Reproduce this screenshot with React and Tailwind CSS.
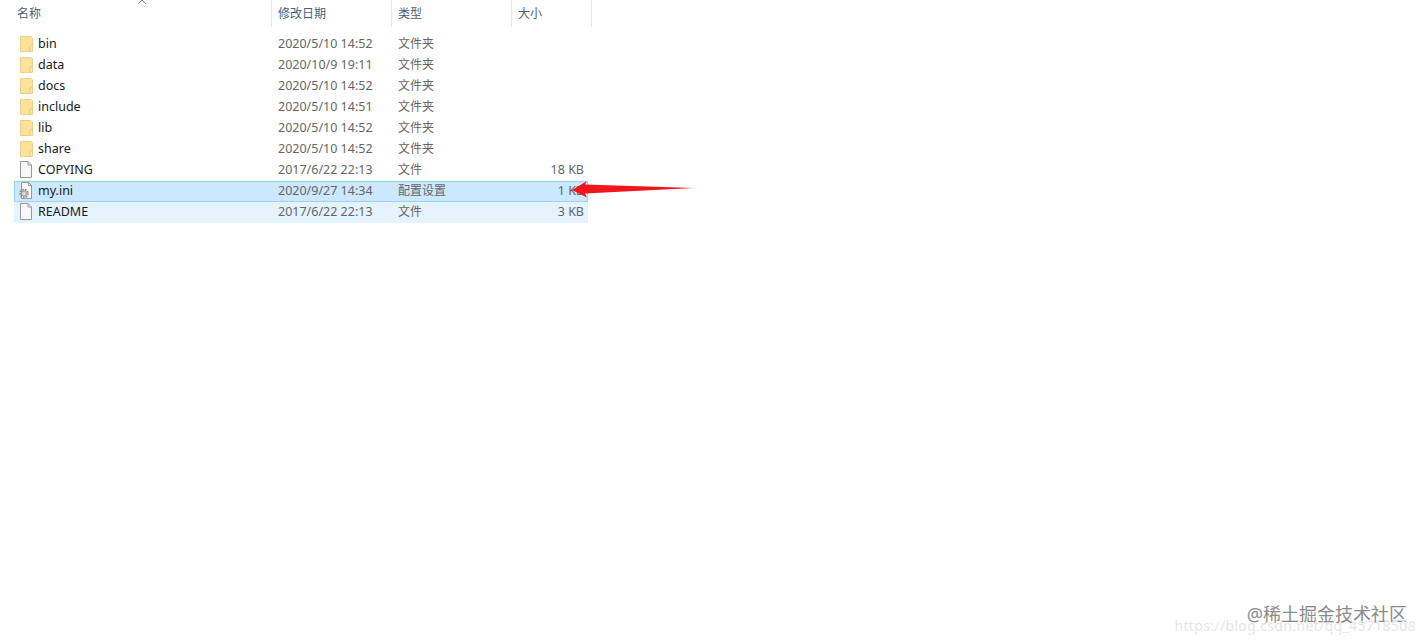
const FONT = 'font-["Noto_Sans","Noto_Sans_CJK_SC",sans-serif]';

const rows = [
  { name: 'bin', date: '2020/5/10 14:52', type: '文件夹', icon: 'folder' },
  { name: 'data', date: '2020/10/9 19:11', type: '文件夹', icon: 'folder' },
  { name: 'docs', date: '2020/5/10 14:52', type: '文件夹', icon: 'folder' },
  { name: 'include', date: '2020/5/10 14:51', type: '文件夹', icon: 'folder' },
  { name: 'lib', date: '2020/5/10 14:52', type: '文件夹', icon: 'folder' },
  { name: 'share', date: '2020/5/10 14:52', type: '文件夹', icon: 'folder' },
  { name: 'COPYING', date: '2017/6/22 22:13', type: '文件', size: '18 KB', icon: 'file' },
  { name: 'my.ini', date: '2020/9/27 14:34', type: '配置设置', size: '1 KB', icon: 'ini', selected: true },
  { name: 'README', date: '2017/6/22 22:13', type: '文件', size: '3 KB', icon: 'file', hover: true },
];

function FolderIcon() {
  return (
    <svg width="16" height="16" viewBox="0 0 16 16" className="shrink-0">
      <path d="M1.5 .5h10.5l1.5 1.5v13.5h-12z" fill="#fde29a" stroke="#ecd089" />
      <path d="M10.5 15.5v-5l3-1.5" fill="none" stroke="#ecd089" />
    </svg>
  );
}

function FileIcon() {
  return (
    <svg width="16" height="18" viewBox="0 0 16 18" className="shrink-0">
      <path d="M1.5 .5h7.5l3.5 3.5v12.5h-11z" fill="#f8f8f8" stroke="#999" />
      <path d="M9 .5v3.5h3.5" fill="none" stroke="#999" />
    </svg>
  );
}

function IniIcon() {
  return (
    <svg width="16" height="18" viewBox="0 0 16 18" className="shrink-0">
      <path d="M3.5 .5h7l3 3v13h-10z" fill="#f8f8f8" stroke="#999" />
      <path d="M10.5 .5v3h3" fill="none" stroke="#999" />
      <circle cx="6" cy="11.5" r="3.8" fill="none" stroke="#8a8a8a" strokeWidth="2" strokeDasharray="1.6 1" />
      <circle cx="6" cy="11.5" r="2.4" fill="#dcdcdc" stroke="#8a8a8a" strokeWidth="0.8" />
    </svg>
  );
}

function HeaderCell({ label, className }) {
  return (
    <div className={`h-[27px] flex items-center border-r border-[#e5e5e5] text-[12px] text-[#4c607a] ${className}`}>
      {label}
    </div>
  );
}

function Row({ row }) {
  let bg = 'border border-transparent';
  if (row.selected) bg = 'bg-[#cce8ff] border border-[#99d1ff]';
  if (row.hover) bg = 'bg-[#e5f3ff] border border-transparent';
  return (
    <div className={`w-[574px] h-[21px] flex items-center text-[12.5px] ${bg}`}>
      <div className="w-[256px] flex items-center">
        {row.icon === 'folder' && <div className="ml-[4px] mr-[3px] mb-[2px] flex"><FolderIcon /></div>}
        {row.icon === 'file' && <div className="ml-[4px] mr-[3px] mb-[2px] flex"><FileIcon /></div>}
        {row.icon === 'ini' && <div className="ml-[3px] mr-[4px] mb-[2px] flex"><IniIcon /></div>}
        <span className="text-[#1a1a1a]">{row.name}</span>
      </div>
      <div className="w-[120px] pl-[7px] text-[#666]">{row.date}</div>
      <div className="w-[120px] pl-[7px] pb-[2px] text-[#666] text-[12px]">{row.type}</div>
      <div className="w-[73px] text-right text-[#666]">{row.size}</div>
    </div>
  );
}

export default function App() {
  return (
    <div className={`relative w-full h-[644px] overflow-hidden bg-white ${FONT}`}>
      <div className="flex h-[27px]">
        <div className="relative w-[272px] h-[27px] flex items-center pl-[17px] border-r border-[#e5e5e5] text-[12px] text-[#4c607a]">
          名称
          <svg width="10" height="6" viewBox="0 0 10 6" className="absolute left-[137px] top-[-1px]">
            <path d="M1 5l4-4 4 4" fill="none" stroke="#8a8a8a" />
          </svg>
        </div>
        <HeaderCell label="修改日期" className="w-[120px] pl-[6px]" />
        <HeaderCell label="类型" className="w-[120px] pl-[6px]" />
        <HeaderCell label="大小" className="w-[80px] pl-[6px]" />
      </div>
      <div className="mt-[7px] ml-[14px]">
        {rows.map((row) => (
          <Row key={row.name} row={row} />
        ))}
      </div>

      <svg width="124" height="20" viewBox="0 0 124 20" className="absolute left-[571px] top-[179px]">
        <path d="M1 11L16 2L14 5.5L123 9L14 14.5L16 18.5Z" fill="#f2161b" />
      </svg>

      <div className="absolute right-[19px] top-[602px] text-[18px] leading-[24px] text-[#6e6e6e] opacity-80 whitespace-nowrap">
        @稀土掘金技术社区
      </div>
      <div className="absolute right-[10px] top-[617px] text-[14px] leading-[18px] tracking-[0.35px] text-[#e6e6e6] whitespace-nowrap">
        https://blog.csdn.net/qq_45718508
      </div>
    </div>
  );
}
